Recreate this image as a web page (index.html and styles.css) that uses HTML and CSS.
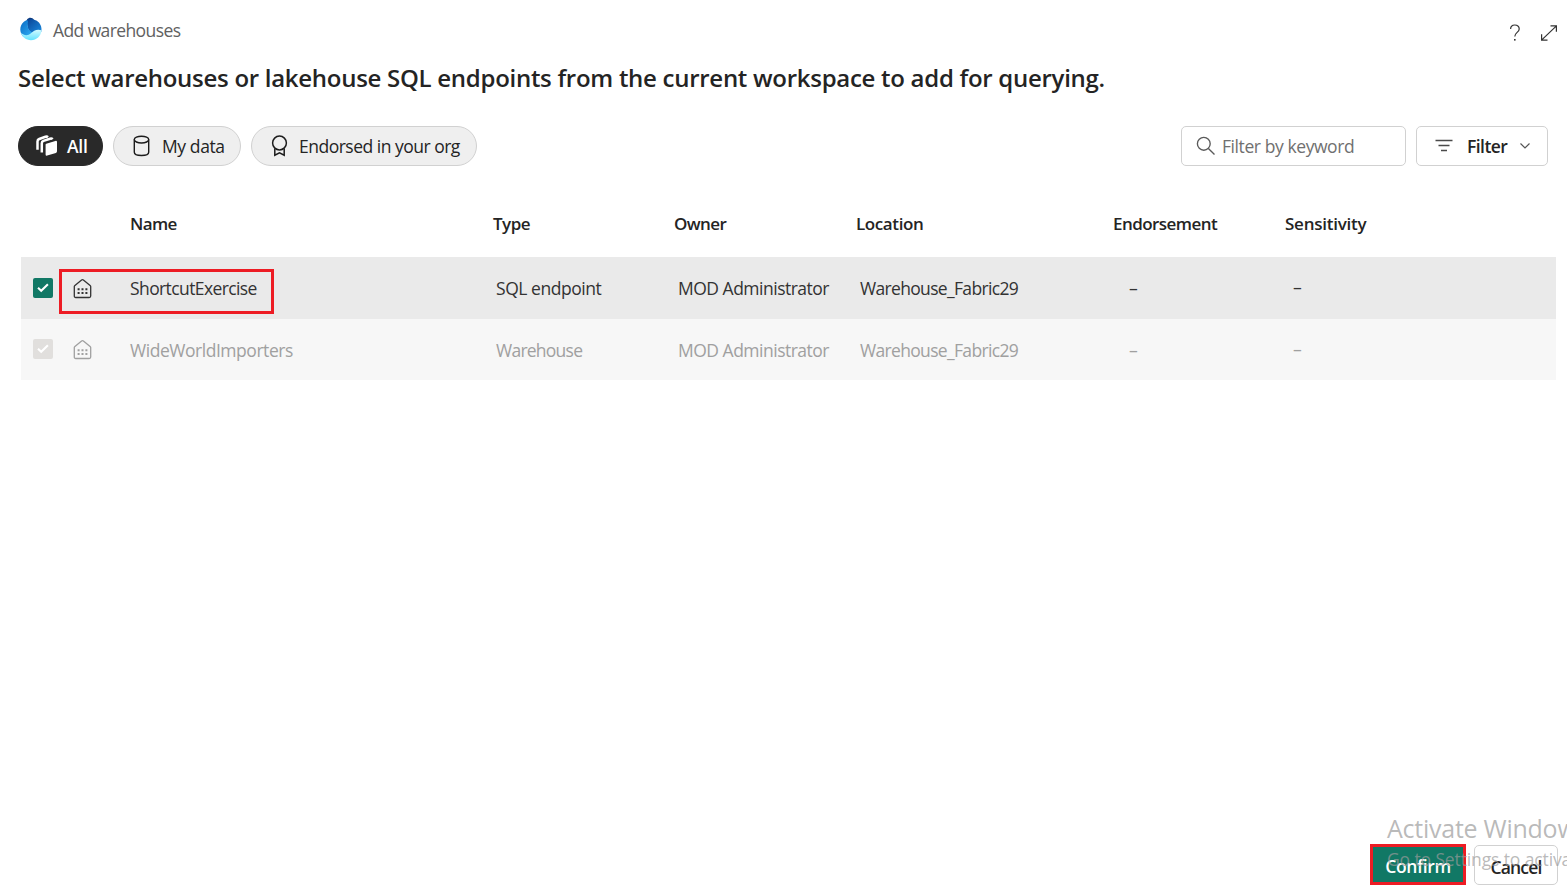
FILE: index.html
```html
<!DOCTYPE html>
<html lang="en">
<head>
<meta charset="utf-8">
<title>Add warehouses</title>
<link rel="stylesheet" href="styles.css">
</head>
<body>
<svg width="0" height="0" class="defs">
  <symbol id="house" viewBox="0 0 20 21">
    <path d="M1.300 8.600 Q1.300 7.900 1.900 7.400 L8.600 1.900 Q9.500 1.200 10.400 1.900 L17.100 7.400 Q17.700 7.900 17.700 8.600 V18 Q17.700 19.500 16.200 19.500 H2.800 Q1.300 19.500 1.300 18 Z" fill="none" stroke="currentColor" stroke-width="1.300"/>
    <path d="M4.600 10.200h2v2h-2zM8.500 10.200h2v2h-2zM12.400 10.200h2v2h-2zM4.600 14.100h2v2h-2zM8.500 14.100h2v2h-2zM12.400 14.100h2v2h-2z" fill="currentColor"/>
  </symbol>
  <symbol id="check" viewBox="0 0 20 20">
    <path d="M5 9.700 L8.200 12.700 L14.900 6.300" fill="none" stroke="#fff" stroke-width="2.100"/>
  </symbol>
</svg>
<main class="dialog">
  <header class="topbar">
    <svg class="logo" width="22" height="24" viewBox="0 0 22 24">
      <defs>
        <linearGradient id="sea" x1="0" y1="0" x2="0" y2="1"><stop offset="0" stop-color="#d4fbff"/><stop offset="1" stop-color="#62e2ff"/></linearGradient>
        <linearGradient id="left" x1="0" y1="0" x2="1" y2="1"><stop offset="0" stop-color="#0c6cc4"/><stop offset="1" stop-color="#2fb0f6"/></linearGradient>
        <linearGradient id="right" x1="0" y1="0" x2="1" y2="1"><stop offset="0" stop-color="#0b4596"/><stop offset="1" stop-color="#1a8be0"/></linearGradient>
      </defs>
      <path d="M7 2.500 C9 -.2 12.600 .4 14 3 L10 8 L6 6Z" fill="#0a3a80"/>
      <path d="M7 3 C13 1 18.500 3.500 20.500 8 C21.700 10.500 21.700 13 21.300 15 L12 16 C7 13 7 8 7 3Z" fill="url(#right)"/>
      <path d="M3.600 5 C7 2 8.600 3 7.800 6.300 C7 10 9 14.500 12.500 15.300 L9 20 H3.500 C-1.500 14.500 0 8.500 3.600 5Z" fill="url(#left)"/>
      <path d="M1 15.800 C4 18.800 8 19 11 16.300 C13.500 13.700 17 11.700 21.600 13.300 C21 19.200 16.500 23.200 11 23.200 C6 23.200 2.200 20.200 1 15.800Z" fill="url(#sea)"/>
    </svg>
    <span class="crumb">Add warehouses</span>
    <span class="help">
      <svg width="12" height="18" viewBox="0 0 12 18"><path d="M1.600 5 C1.600 2.500 3.300 1 5.800 1 C8.300 1 10.200 2.500 10.200 4.900 C10.200 8.300 5.800 8.500 5.800 12.500" fill="none" stroke="#333" stroke-width="1.200"/><rect x="5" y="15" width="1.600" height="1.600" fill="#333"/></svg>
    </span>
    <svg width="18" height="18" viewBox="0 0 18 18" fill="none" stroke="#333" stroke-width="1.200"><path d="M1.800 15.900 L16.200 2.100 M10.500 1.900 H16.400 V7.700 M1.600 10.300 V16.100 H7.500"/></svg>
  </header>
  <h1 class="title">Select warehouses or lakehouse SQL endpoints from the current workspace to add for querying.</h1>
  <div class="toolbar">
    <button class="pill pill-all">
      <svg width="22" height="22" viewBox="0 0 22 22">
        <path d="M10.300 8.700 L19.300 5.900 Q21 5.500 21 7 V16.300 Q21 17.500 19.900 17.900 L11.200 20.600 Q9.600 21 9.600 19.500 V9.800 Q9.600 8.900 10.300 8.700Z" fill="#fff"/>
        <path d="M1.500 14.800 V6.400 Q1.500 4.600 3.200 4 L9.500 1.800 Q11 1.300 12 2.200 M5.800 17.600 V8.200 Q5.800 6.500 7.400 5.900 L14 3.700 Q15.700 3.200 16.700 4.200" fill="none" stroke="#fff" stroke-width="2.500"/>
      </svg>
      <span class="t-all">All</span>
    </button>
    <button class="pill pill-my">
      <svg width="17" height="22" viewBox="0 0 17 22" fill="none" stroke="#1c1c1c" stroke-width="1.400"><ellipse cx="8.500" cy="4.600" rx="7.200" ry="3.400"/><path d="M1.300 4.600 V17.200 C1.300 21.500 15.700 21.500 15.700 17.200 V4.600"/></svg>
      <span class="t-my">My data</span>
    </button>
    <button class="pill pill-org">
      <svg width="17" height="22" viewBox="0 0 17 22" fill="none" stroke="#1c1c1c" stroke-width="1.500"><circle cx="8.500" cy="8" r="6.900"/><path d="M3.800 13.400 V20.200 L8.500 17.800 L13.200 20.200 V13.400"/></svg>
      <span class="t-org">Endorsed in your org</span>
    </button>
    <div class="search">
      <svg width="20" height="20" viewBox="0 0 20 20" fill="none" stroke="#5a5a5a" stroke-width="1.350"><circle cx="7.800" cy="7.800" r="6.400"/><path d="M12.400 12.400 L18.500 18.500"/></svg>
      <span class="t-search">Filter by keyword</span>
    </div>
    <button class="filter">
      <svg width="18" height="14" viewBox="0 0 18 14" stroke="#4a4a4a" stroke-width="1.300"><path d="M.5 1.500 H17.500 M3.500 6.500 H14.500 M6 11.500 H12"/></svg>
      <span class="t-filter">Filter</span>
      <svg width="12" height="8" viewBox="0 0 12 8" fill="none" stroke="#555" stroke-width="1.200"><path d="M1.500 1.500 L6 6 L10.500 1.500"/></svg>
    </button>
  </div>
  <section class="table">
    <div class="row head">
      <span></span><span></span>
      <span class="h-name">Name</span><span class="h-type">Type</span><span class="h-owner">Owner</span><span class="h-loc">Location</span><span class="h-end">Endorsement</span><span class="h-sens">Sensitivity</span>
    </div>
    <div class="row selected">
      <svg class="box"><use href="#check"/></svg>
      <svg class="house"><use href="#house"/></svg>
      <span class="c-name1">ShortcutExercise</span><span class="c-type1">SQL endpoint</span><span class="c-owner">MOD Administrator</span><span class="c-loc">Warehouse_Fabric29</span><span class="c-end">–</span><span class="c-sens">–</span>
      <div class="highlight"></div>
    </div>
    <div class="row disabled">
      <svg class="box"><use href="#check"/></svg>
      <svg class="house"><use href="#house"/></svg>
      <span class="c-name2">WideWorldImporters</span><span class="c-type2">Warehouse</span><span class="c-owner">MOD Administrator</span><span class="c-loc">Warehouse_Fabric29</span><span class="c-end">–</span><span class="c-sens">–</span>
    </div>
  </section>
  <footer class="footer">
    <button class="confirm"><span class="t-confirm">Confirm</span></button>
    <button class="cancel"><span class="t-cancel">Cancel</span></button>
  </footer>
  <div class="watermark">
    <div class="wm-title">Activate Windows</div>
    <div class="wm-sub">Go to Settings to activate Windows.</div>
  </div>
</main>
</body>
</html>
```
FILE: styles.css
```css
* { box-sizing: border-box; }
body { margin: 0; background: #fff; color: #242424; font-family: "Open Sans", "Noto Sans", sans-serif; font-size: 17.5px; overflow: hidden; }
.defs { position: absolute; }
svg { flex: none; display: block; }
button { font: inherit; color: inherit; margin: 0; }
span { white-space: nowrap; }
.dialog { position: relative; height: 894px; display: flex; flex-direction: column; overflow: hidden; }
.topbar { height: 60px; padding: 4px 9px 0 20px; display: flex; align-items: center; }
.topbar > svg:last-child { margin-top: 1px; }
.logo { margin-top: -7px; }
.crumb { margin-left: 11px; margin-top: -5px; color: #616161; letter-spacing: -.6px; }
.help { margin-left: auto; margin-right: 19px; }
.help svg { margin-top: 1px; }
.title { margin: 0; padding-left: 18px; height: 66px; line-height: 36px; font-size: 24px; font-weight: 600; letter-spacing: -.28px; white-space: nowrap; }
.toolbar { height: 40px; display: flex; gap: 10px; padding: 0 19px 0 18px; }
.pill { height: 40px; display: flex; align-items: center; border: 1px solid #d1d1d1; border-radius: 20px; background: #efefef; padding: 0; }
.pill-all { width: 85px; background: #292929; border-color: #292929; color: #fff; padding-left: 17px; gap: 9px; font-weight: 600; }
.t-all { letter-spacing: -.2px; }
.pill-my { width: 128px; padding-left: 19px; gap: 12px; letter-spacing: -.4px; }
.pill-org { width: 226px; padding-left: 19px; gap: 11px; letter-spacing: -.5px; }
.search { margin-left: auto; width: 225px; border: 1px solid #d1d1d1; border-radius: 5px; display: flex; align-items: center; padding-left: 14px; gap: 6px; color: #707070; letter-spacing: -.42px; }
.filter { width: 132px; border: 1px solid #d1d1d1; border-radius: 5px; background: #fff; display: flex; align-items: center; padding: 0 0 0 18px; font-weight: 600; letter-spacing: -.55px; }
.t-filter { margin: 0 12px 0 14px; }
.table { margin: 24px 11px 0 21px; }
.row { position: relative; display: grid; grid-template-columns: 52px 57px 366px 182px 182px 269px 163px 1fr; align-items: center; height: 61px; font-weight: 400; }
.head { height: 67px; grid-template-columns: 52px 57px 363px 181px 182px 257px 172px 1fr; font-size: 17px; font-weight: 600; }
.h-name, .h-owner { letter-spacing: -.6px; }
.h-type { letter-spacing: -.5px; }
.h-loc { letter-spacing: -.4px; }
.h-end { letter-spacing: -.55px; }
.h-sens { letter-spacing: -.25px; }
.c-name1 { letter-spacing: -.6px; }
.c-name2, .c-type1 { letter-spacing: -.46px; }
.c-type2 { letter-spacing: -.75px; }
.c-owner { letter-spacing: -.5px; }
.c-loc { letter-spacing: -.67px; }
.c-sens { padding: 0 0 2px 1px; }
.selected { height: 62px; background: #eaeaea; color: #333; }
.disabled { background: #f7f7f7; color: #a0a0a0; }
.box { width: 20px; height: 20px; margin-left: 12px; border-radius: 2px; background: #117865; }
.disabled .box { background: #e1dfdd; margin-top: -1px; }
.house { width: 20px; height: 21px; }
.highlight { position: absolute; left: 38px; top: 12px; width: 215px; height: 45px; border: 3px solid #ed1c24; }
.footer { margin-top: auto; margin-bottom: 9px; height: 41px; padding-right: 9px; display: flex; justify-content: flex-end; gap: 8px; font-weight: 600; }
.confirm { width: 96px; border: 3px solid #ed1c24; background: #117865; color: #fff; padding: 3px 0 0; letter-spacing: -.4px; }
.cancel { width: 84px; border: 1px solid #d1d1d1; border-radius: 5px; background: #fff; padding: 3px 0 0; margin-top: 1px; letter-spacing: -.8px; }
.watermark { position: absolute; left: 1387px; top: 810px; color: rgba(155,155,155,.7); white-space: nowrap; }
.wm-title { font-size: 25px; line-height: 36px; letter-spacing: -.25px; }
.wm-sub { font-size: 17.5px; line-height: 26px; letter-spacing: -.12px; }
```
